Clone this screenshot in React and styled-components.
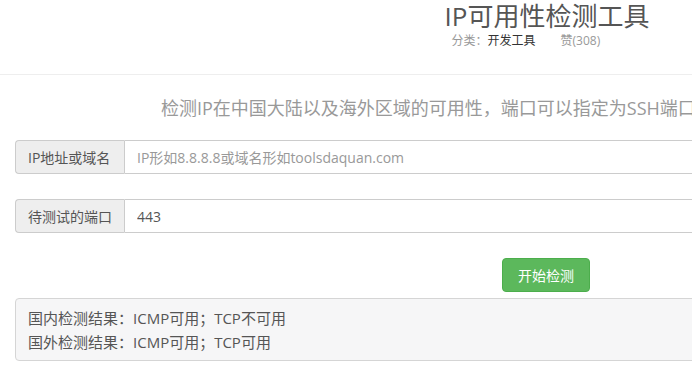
import React from "react";
import styled, { createGlobalStyle } from "styled-components";

const GlobalStyle = createGlobalStyle`
  html, body {
    margin: 0;
    padding: 0;
    overflow: hidden;
    background: #fff;
  }
  body {
    font-family: "Open Sans", "Noto Sans CJK SC", sans-serif;
    font-size: 14px;
    color: #555;
  }
`;

const Page = styled.div`
  width: 1092px;
`;

const Header = styled.header`
  height: 74px;
  border-bottom: 1px solid #eee;
  text-align: center;
`;

const HeadBlock = styled.div`
  display: inline-block;
  text-align: left;
  padding-left: 2px;
`;

const Title = styled.h1`
  margin: 0;
  font-size: 26px;
  line-height: 32px;
  font-weight: normal;
  color: #555;
`;

const Meta = styled.div`
  padding-left: 7px;
  font-size: 12px;
  line-height: 18px;
  color: #999;
  display: flex;
  gap: 25px;
`;

const Strong = styled.span`
  color: #333;
`;

const Main = styled.main`
  padding: 0 15px;
`;

const Desc = styled.p`
  margin: 21px 0 20px;
  padding-left: 146px;
  font-size: 18px;
  line-height: 24px;
  color: #999;
  white-space: nowrap;
`;

const Group = styled.div`
  display: flex;
  height: 34px;
  margin-bottom: ${p => p.$gap}px;
`;

const Addon = styled.span`
  box-sizing: border-box;
  width: 109px;
  flex: none;
  display: flex;
  align-items: center;
  padding: 0 12px;
  background: #eee;
  border: 1px solid #ccc;
  border-right: none;
  border-radius: 4px 0 0 4px;
  color: #555;
  font-size: 14px;
  white-space: nowrap;
`;

const Field = styled.input`
  box-sizing: border-box;
  flex: 1;
  height: 34px;
  padding: 0 12px;
  border: 1px solid #ccc;
  border-radius: 0 4px 4px 0;
  font-family: inherit;
  font-size: 14px;
  color: #555;
  outline: none;
  &::placeholder {
    color: #999;
  }
`;

const Actions = styled.div`
  display: flex;
  justify-content: center;
  margin-bottom: 6px;
`;

const Button = styled.button`
  box-sizing: border-box;
  width: 88px;
  height: 34px;
  background: #5cb85c;
  border: 1px solid #4cae4c;
  border-radius: 4px;
  color: #fff;
  font-family: inherit;
  font-size: 14px;
  cursor: pointer;
`;

const Result = styled.div`
  padding: 7px 12px 6px;
  background: #f6f6f7;
  border: 1px solid #d5d5d5;
  border-radius: 4px;
  color: #555;
  font-size: 15px;
  line-height: 24px;
`;

export default function App() {
  return (
    <>
      <GlobalStyle />
      <Page>
        <Header>
          <HeadBlock>
            <Title>IP可用性检测工具</Title>
            <Meta>
              <span>
                分类：<Strong>开发工具</Strong>
              </span>
              <span>赞(308)</span>
            </Meta>
          </HeadBlock>
        </Header>
        <Main>
          <Desc>检测IP在中国大陆以及海外区域的可用性，端口可以指定为SSH端口</Desc>
          <Group $gap={25}>
            <Addon>IP地址或域名</Addon>
            <Field placeholder="IP形如8.8.8.8或域名形如toolsdaquan.com" />
          </Group>
          <Group $gap={25}>
            <Addon>待测试的端口</Addon>
            <Field defaultValue="443" />
          </Group>
          <Actions>
            <Button>开始检测</Button>
          </Actions>
          <Result>
            <div>国内检测结果：ICMP可用；TCP不可用</div>
            <div>国外检测结果：ICMP可用；TCP可用</div>
          </Result>
        </Main>
      </Page>
    </>
  );
}
